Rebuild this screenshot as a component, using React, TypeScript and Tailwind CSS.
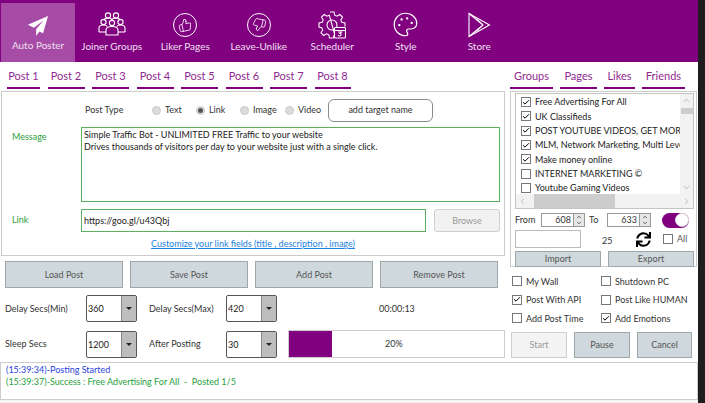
import React from 'react'
import { ChevronUp, ChevronDown, ChevronLeft, ChevronRight, Check, ThumbsUp, ThumbsDown, Palette } from 'lucide-react'
import { FaSync } from 'react-icons/fa'

const FONT = "font-['Lato','Open_Sans',sans-serif]"
const TOP_TABS = ['Joiner Groups', 'Liker Pages', 'Leave-Unlike', 'Scheduler', 'Style', 'Store']
const POST_TABS: [string, number][] = [['Post 1', 33], ['Post 2', 37], ['Post 3', 37], ['Post 4', 37], ['Post 5', 37], ['Post 6', 37], ['Post 7', 37], ['Post 8', 36]]
const SIDE_TABS: [string, number][] = [['Groups', 43], ['Pages', 37], ['Likes', 31], ['Friends', 43]]
const GROUPS: [string, boolean][] = [
  ['Free Advertising For All', true],
  ['UK Classifieds', true],
  ['POST YOUTUBE VIDEOS, GET MORE LIKES', true],
  ['MLM, Network Marketing, Multi Level Marketing', true],
  ['Make money online', true],
  ['INTERNET MARKETING ©', false],
  ['Youtube Gaming Videos', false],
]

function TabIcon({ name }: { name: string }) {
  const stroke = { fill: 'none', stroke: 'white', strokeWidth: 1.1 }
  if (name === 'Joiner Groups') {
    return (
      <svg width="28" height="28" viewBox="0 0 28 28" {...stroke}>
        <circle cx="10" cy="4.5" r="2.6" /><circle cx="18" cy="4.5" r="2.6" />
        <circle cx="5.5" cy="11" r="2.6" /><circle cx="14" cy="12" r="2.6" /><circle cx="22.5" cy="11" r="2.6" />
        <path d="M6 9.5c0-2 1.5-2.5 4-2.5s4 .5 4 2.5M14 9.5c0-2 1.5-2.5 4-2.5s4 .5 4 2.5" />
        <path d="M1 21v-4c0-2 2-3 4.5-3 1.5 0 3 .4 3.800 1.500M27 21v-4c0-2-2-3-4.500-3-1.500 0-3 .4-3.800 1.500" />
        <path d="M8 24v-5c0-2.500 2.500-3.500 6-3.500s6 1 6 3.500v5zM1 21h7M20 21h7" />
      </svg>
    )
  }
  if (name === 'Liker Pages' || name === 'Leave-Unlike') {
    const Thumb = name === 'Liker Pages' ? ThumbsUp : ThumbsDown
    return (
      <div className="w-[24px] h-[24px] rounded-full border border-white flex items-center justify-center">
        <Thumb size={14} color="white" strokeWidth={1.3} className={name === 'Liker Pages' ? '-rotate-12' : 'rotate-12'} />
      </div>
    )
  }
  if (name === 'Scheduler') {
    return (
      <svg width="28" height="28" viewBox="0 0 28 28" {...stroke}>
        <path d="M12 1h4l.7 3.200 2.300 1 2.800-1.700 2.700 2.700-1.700 2.800 1 2.300 3.200.7v3.500M17 24.500h-1l-.5 2.500h-4l-.7-3.200-2.300-1-2.800 1.700-2.700-2.700 1.700-2.800-1-2.300L1 16v-4l3.200-.7 1-2.300-1.700-2.800 2.700-2.700 2.800 1.700 2.300-1z" />
        <circle cx="14" cy="14" r="5" />
        <rect x="16.500" y="16.500" width="11" height="10.500" rx="1" fill="#800080" />
        <path d="M16.500 19.500h11M20 21h3.500l-1.500 1.500c1.500 0 1.500 2.500-.5 2.500-.8 0-1.200-.3-1.500-.8" />
      </svg>
    )
  }
  if (name === 'Style') {
    return <Palette size={27} color="white" strokeWidth={1.1} />
  }
  return (
    <svg width="24" height="26" viewBox="0 0 24 26" {...stroke}>
      <path d="M2 1.500 22.500 13 2 24.500z" />
      <path d="M2 1.500 16 13 2 24.500M9.500 19 16 13M9.500 7 16 13" />
    </svg>
  )
}

function TopBar() {
  return (
    <div className="h-[62px] bg-[#800080] flex items-end pl-px shrink-0">
      <div className="w-[74px] h-[59px] bg-[#a64ca6] flex flex-col items-center text-[#f0e0f0]">
        <svg width="22" height="22" viewBox="0 0 24 24" fill="white" className="mt-[12px]">
          <path d="M23 1 1 10.500l6.500 3.500L18 6l-8 9.500V23l3.500-5 4 2z" />
        </svg>
        <span className="text-[10px] mt-[1px] leading-[14px]">Auto Poster</span>
      </div>
      {TOP_TABS.map((name) => (
        <div key={name} className="w-[73.500px] h-[59px] flex flex-col items-center text-[#f0e0f0]">
          <div className="h-[29px] mt-[7px] flex items-center justify-center"><TabIcon name={name} /></div>
          <span className="text-[10px] leading-[14px] whitespace-nowrap">{name}</span>
        </div>
      ))}
    </div>
  )
}

function UnderTabs({ tabs, gap, active }: { tabs: [string, number][]; gap: string; active: string }) {
  return (
    <div className={`flex ${gap}`}>
      {tabs.map(([label, width]) => (
        <div key={label} style={{ width }} className="relative h-[27px] border-b-[2px] border-[#800080] text-[#8f2a8f] text-[11px] leading-[28px] text-center whitespace-nowrap">
          {label}
          {/* 选中的 tab 下方的小尖角 */}
          {label === active ? (
            <span className="absolute left-1/2 -translate-x-1/2 top-full border-x-[2px] border-x-transparent border-t-[2px] border-t-[#800080]" />
          ) : null}
        </div>
      ))}
    </div>
  )
}

function Radio({ label, on, className }: { label: string; on?: boolean; className: string }) {
  return (
    <div className={`flex items-center gap-[4px] ${className}`}>
      <span className="w-[9px] h-[9px] rounded-full bg-[#dcdcdc] border border-[#c8c8c8] flex items-center justify-center">
        {on ? <span className="w-[5px] h-[5px] rounded-full bg-[#555]" /> : null}
      </span>
      <span className="text-[9px] text-[#333]">{label}</span>
    </div>
  )
}

function Box({ on, className = '' }: { on?: boolean; className?: string }) {
  return (
    <span className={`w-[10px] h-[10px] shrink-0 border border-[#777] bg-white flex items-center justify-center ${className}`}>
      {on ? <Check size={9} strokeWidth={3} color="#000" /> : null}
    </span>
  )
}

function ActionButton({ label, className }: { label: string; className: string }) {
  return (
    <div className={`bg-[#cfd8dc] border border-[#9ea7aa] text-[#555] text-[9px] flex items-center justify-center ${className}`}>{label}</div>
  )
}

function Combo({ value }: { value: string }) {
  return (
    <div className="w-[51px] h-[27px] border border-[#555] rounded-[2px] bg-white flex">
      <span className="flex-1 pl-[1px] text-[9px] leading-[25px] text-[#222]">{value}</span>
      <span className="w-[15px] bg-[#bdbdbd] border-l border-[#888] flex items-center justify-center">
        <span className="border-x-[3px] border-x-transparent border-t-[3px] border-t-[#222]" />
      </span>
    </div>
  )
}

function Spinner({ value, className = '' }: { value: string; className?: string }) {
  return (
    <div className={`flex h-[14px] ${className}`}>
      <span className="w-[33px] border border-[#999] text-[9px] leading-[12px] text-right pr-[2px] text-[#333]">{value}</span>
      <span className="w-[11px] flex flex-col bg-[#e6e6e6] border border-[#999] border-l-0">
        <ChevronUp size={6} strokeWidth={3} color="#333" className="mx-auto" />
        <ChevronDown size={6} strokeWidth={3} color="#333" className="mx-auto" />
      </span>
    </div>
  )
}

function PostPanel() {
  return (
    <div className="ml-px w-[504px] h-[165px] border border-[#cccccc] shrink-0">
      <div className="h-[35px] flex items-center pt-[1px]">
        <span className="ml-[83px] w-[67px] text-[9px] text-[#333]">Post Type</span>
        <Radio label="Text" on={false} className="w-[44px]" />
        <Radio label="Link" on className="w-[44px]" />
        <Radio label="Image" className="w-[45px]" />
        <Radio label="Video" className="w-[39px]" />
        <div className="ml-[4px] w-[105px] h-[23px] border border-[#8a8a8a] rounded-[6px] text-[9px] text-[#333] flex items-center justify-center">add target name</div>
      </div>
      <div className="flex">
        <span className="w-[79px] pl-[10px] pt-[3px] text-[9px] text-[#2e9e3a]">Message</span>
        <div className="w-[419px] h-[75px] border border-[#5cb060] px-[2px] pt-[1px] text-[9px] leading-[12px] text-[#222]">
          Simple Traffic Bot - UNLIMITED FREE Traffic to your website<br />
          Drives thousands of visitors per day to your website just with a single click.
        </div>
      </div>
      <div className="flex mt-[7px]">
        <span className="w-[79px] pl-[10px] text-[9px] text-[#2e9e3a] leading-[21px]">Link</span>
        <div className="w-[345px] h-[23px] border border-[#5cb060] px-[2px] text-[9px] leading-[21px] text-[#222]">https://goo.gl/u43Qbj</div>
        <div className="ml-[8px] w-[66px] h-[23px] bg-[#f2f2f2] border border-[#cfcfcf] rounded-[3px] text-[9px] text-[#999] flex items-center justify-center">Browse</div>
      </div>
      <div className="mt-[5px] text-center text-[9px] leading-[14px] text-[#1b7fe0] underline">Customize your link fields (title , description , image)</div>
    </div>
  )
}

function LeftColumn() {
  return (
    <div className="w-[508px] shrink-0">
      <PostPanel />
      <div className="mt-[5px] ml-[5px] flex gap-[7px]">
        {['Load Post', 'Save Post', 'Add Post', 'Remove Post'].map((label) => (
          <ActionButton key={label} label={label} className="w-[118px] h-[27px]" />
        ))}
      </div>
      <div className="mt-[7px] ml-[5px] flex items-center h-[27px] text-[9px] text-[#333]">
        <span className="w-[81px]">Delay Secs(Min)</span>
        <Combo value="360" />
        <span className="ml-[12px] w-[77px]">Delay Secs(Max)</span>
        <Combo value="420" />
        <span className="ml-[102px]">00:00:13</span>
      </div>
      <div className="mt-[8px] ml-[5px] flex items-center h-[28px] text-[9px] text-[#333]">
        <span className="w-[81px]">Sleep Secs</span>
        <Combo value="1200" />
        <span className="ml-[12px] w-[77px]">After Posting</span>
        <Combo value="30" />
        <div className="ml-[11px] w-[217px] h-[28px] border border-[#cccccc] flex">
          <div className="w-[43px] bg-[#800080]" />
          <span className="ml-[53px] leading-[26px]">20%</span>
        </div>
      </div>
    </div>
  )
}

function RightColumn() {
  return (
    <div className="w-[187px] ml-[2px] shrink-0">
      <div className="h-[176px] border border-[#cccccc] pl-[4px] pt-px">
        <div className="w-[179px] h-[116px] border border-[#c4c4c4] flex flex-col">
          <div className="flex-1 flex min-h-0">
            <div className="flex-1 min-w-0 overflow-hidden pl-[5px] pt-[1px]">
              {GROUPS.map(([name, on]) => (
                <div key={name} className="h-[14.300px] flex items-center gap-[4px] text-[9px] text-[#222] whitespace-nowrap">
                  <Box on={on} />
                  <span>{name}</span>
                </div>
              ))}
            </div>
            <div className="w-[13px] bg-[#f2f2f2] flex flex-col items-center justify-between py-[2px]">
              <div className="flex flex-col items-center">
                <ChevronUp size={9} color="#aaa" />
                <span className="w-[12px] h-[6px] mt-[3px] bg-[#cdcdcd]" />
              </div>
              <ChevronDown size={9} color="#aaa" />
            </div>
          </div>
          <div className="h-[14px] bg-[#f2f2f2] flex items-center justify-between px-[2px]">
            <ChevronLeft size={9} color="#aaa" />
            <span className="w-[81px] h-[14px] bg-[#cdcdcd] mr-[61px]" />
            <ChevronRight size={9} color="#aaa" />
          </div>
        </div>
        <div className="mt-[3px] flex items-center h-[16px] text-[9px] text-[#333]">
          <span className="w-[26px]">From</span>
          <Spinner value="608" className="w-[44px]" />
          <span className="ml-[4px] w-[18px]">To</span>
          <Spinner value="633" className="w-[44px]" />
          <span className="ml-[11px] w-[27px] h-[15px] rounded-full bg-[#800080] flex items-center justify-end">
            <span className="w-[14px] h-[14px] rounded-full bg-white border border-[#ddd]" />
          </span>
        </div>
        <div className="mt-[2px] flex items-center h-[18px] text-[9px] text-[#333]">
          <span className="w-[66px] h-[18px] border border-[#bbb]" />
          <span className="ml-[21px] w-[34px] pt-[3px]">25</span>
          <FaSync size={15} color="#000" />
          <Box className="ml-[12px]" />
          <span className="ml-[4px] text-[#555]">All</span>
        </div>
        <div className="mt-[3px] flex gap-[7px]">
          <ActionButton label="Import" className="w-[86px] h-[16px]" />
          <ActionButton label="Export" className="w-[86px] h-[16px]" />
        </div>
      </div>
      <div className="ml-[2px] mt-[5px] grid grid-cols-[89px_1fr] auto-rows-[18.500px] text-[9px] text-[#333]">
        {([['My Wall', false], ['Shutdown PC', false], ['Post With API', true], ['Post Like HUMAN', false], ['Add Post Time', false], ['Add Emotions', true]] as [string, boolean][]).map(([label, on]) => (
          <div key={label} className="flex items-center gap-[4px]">
            <Box on={on} />
            <span>{label}</span>
          </div>
        ))}
      </div>
      <div className="ml-px mt-[4.500px] flex gap-[7px]">
        <div className="w-[56px] h-[26px] bg-[#f4f4f4] border border-[#cfcfcf] text-[9px] text-[#999] flex items-center justify-center">Start</div>
        <ActionButton label="Pause" className="w-[56px] h-[26px] border-[#7f8a8d]" />
        <ActionButton label="Cancel" className="w-[55px] h-[26px] border-[#7f8a8d]" />
      </div>
    </div>
  )
}

export default function App() {
  return (
    <div className={`w-[705px] h-[403px] flex bg-[#1e1e1e] overflow-hidden ${FONT}`}>
      <div className="w-[698px] h-full bg-[#f4f4f4] flex flex-col">
        <div className="bg-white flex flex-col">
          <TopBar />
          <div className="flex h-[29px] shrink-0">
            <div className="w-[510px] pl-[7px]"><UnderTabs tabs={POST_TABS} gap="gap-[7.500px]" active="Post 4" /></div>
            <UnderTabs tabs={SIDE_TABS} gap="gap-[7px]" active="Groups" />
          </div>
          <div className="flex">
            <LeftColumn />
            <RightColumn />
          </div>
          <div className="mt-[4px] h-[38px] border border-[#cccccc] px-[5px] pt-[1px] text-[9px] leading-[12px] whitespace-pre">
            <div className="text-[#2a3fe0]">(15:39:34)-Posting Started</div>
            <div className="text-[#1fa03a]">(15:39:37)-Success : Free Advertising For All  -  Posted 1/5</div>
          </div>
        </div>
      </div>
    </div>
  )
}
